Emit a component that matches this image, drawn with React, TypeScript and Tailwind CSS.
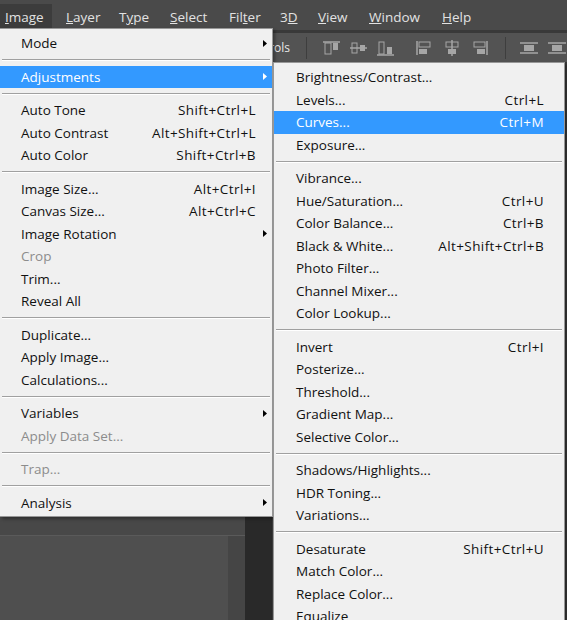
import clsx from "clsx";

type Row =
  | { label: string; shortcut?: string; sub?: boolean; disabled?: boolean; active?: boolean }
  | "sep";

const mainItems: Row[] = [
  { label: "Mode", sub: true },
  "sep",
  { label: "Adjustments", sub: true, active: true },
  "sep",
  { label: "Auto Tone", shortcut: "Shift+Ctrl+L" },
  { label: "Auto Contrast", shortcut: "Alt+Shift+Ctrl+L" },
  { label: "Auto Color", shortcut: "Shift+Ctrl+B" },
  "sep",
  { label: "Image Size...", shortcut: "Alt+Ctrl+I" },
  { label: "Canvas Size...", shortcut: "Alt+Ctrl+C" },
  { label: "Image Rotation", sub: true },
  { label: "Crop", disabled: true },
  { label: "Trim..." },
  { label: "Reveal All" },
  "sep",
  { label: "Duplicate..." },
  { label: "Apply Image..." },
  { label: "Calculations..." },
  "sep",
  { label: "Variables", sub: true },
  { label: "Apply Data Set...", disabled: true },
  "sep",
  { label: "Trap...", disabled: true },
  "sep",
  { label: "Analysis", sub: true },
];

const adjustItems: Row[] = [
  { label: "Brightness/Contrast..." },
  { label: "Levels...", shortcut: "Ctrl+L" },
  { label: "Curves...", shortcut: "Ctrl+M", active: true },
  { label: "Exposure..." },
  "sep",
  { label: "Vibrance..." },
  { label: "Hue/Saturation...", shortcut: "Ctrl+U" },
  { label: "Color Balance...", shortcut: "Ctrl+B" },
  { label: "Black & White...", shortcut: "Alt+Shift+Ctrl+B" },
  { label: "Photo Filter..." },
  { label: "Channel Mixer..." },
  { label: "Color Lookup..." },
  "sep",
  { label: "Invert", shortcut: "Ctrl+I" },
  { label: "Posterize..." },
  { label: "Threshold..." },
  { label: "Gradient Map..." },
  { label: "Selective Color..." },
  "sep",
  { label: "Shadows/Highlights..." },
  { label: "HDR Toning..." },
  { label: "Variations..." },
  "sep",
  { label: "Desaturate", shortcut: "Shift+Ctrl+U" },
  { label: "Match Color..." },
  { label: "Replace Color..." },
  { label: "Equalize" },
];

const menuBar = [
  { pre: "", u: "L", post: "ayer", w: "w-[53px]" },
  { pre: "T", u: "y", post: "pe", w: "w-[51px]" },
  { pre: "", u: "S", post: "elect", w: "w-[59px]" },
  { pre: "Fil", u: "t", post: "er", w: "w-[51px]" },
  { pre: "3", u: "D", post: "", w: "w-[38px]" },
  { pre: "", u: "V", post: "iew", w: "w-[51px]" },
  { pre: "", u: "W", post: "indow", w: "w-[73px]" },
  { pre: "", u: "H", post: "elp", w: "w-[50px]" },
];

const Arrow = ({ white }: { white?: boolean }) => (
  <svg width="4" height="7" viewBox="0 0 4 7">
    <path d="M0 0 L4 3.5 L0 7 Z" fill={white ? "#ffffff" : "#000000"} />
  </svg>
);

const Separator = () => (
  <div className="flex h-[11px] flex-col justify-center px-[2px]">
    <div className="h-px bg-[#a0a0a0]" />
    <div className="h-px bg-white" />
  </div>
);

const MenuList = ({ items, padL, padR, arrows }: { items: Row[]; padL: string; padR: string; arrows?: boolean }) => (
  <>
    {items.map((it, i) =>
      it === "sep" ? (
        <Separator key={i} />
      ) : (
        <div
          key={i}
          className={clsx(
            "flex h-[22.5px] items-center whitespace-nowrap",
            padL,
            padR,
            it.active ? "bg-[#3399ff] text-white" : it.disabled ? "text-[#8c8c8c]" : "text-[#111111]"
          )}
        >
          <span className="flex-1">{it.label}</span>
          {it.shortcut && <span className="tracking-[0.4px]">{it.shortcut}</span>}
          {arrows && (
            <span className="flex w-[11px] justify-end">{it.sub && <Arrow white={it.active} />}</span>
          )}
        </div>
      )
    )}
  </>
);

const ToolIcon = ({ kind }: { kind: number }) => {
  const c = "#a6a6a6";
  return (
    <svg width="20" height="18" viewBox="0 0 20 18">
      {kind === 0 && (
        <>
          <path d="M1 3 H18" stroke={c} strokeWidth="1.5" />
          <rect x="3" y="4" width="6" height="11" fill="none" stroke={c} />
          <rect x="11" y="4" width="5" height="7" fill={c} />
        </>
      )}
      {kind === 1 && (
        <>
          <path d="M1 9 H18" stroke={c} strokeWidth="1.5" />
          <rect x="3" y="4" width="5" height="10" fill="none" stroke={c} />
          <rect x="11" y="6" width="5" height="6" fill={c} />
        </>
      )}
      {kind === 2 && (
        <>
          <path d="M1 16 H18" stroke={c} strokeWidth="1.5" />
          <rect x="3" y="3" width="5" height="12" fill="none" stroke={c} />
          <rect x="11" y="8" width="5" height="7" fill={c} />
        </>
      )}
      {kind === 3 && (
        <>
          <path d="M3 2 V16" stroke={c} strokeWidth="1.5" />
          <rect x="5" y="3" width="11" height="5" fill="none" stroke={c} />
          <rect x="5" y="10" width="8" height="5" fill={c} />
        </>
      )}
      {kind === 4 && (
        <>
          <path d="M10 1 V17" stroke={c} strokeWidth="1.5" />
          <rect x="4" y="3" width="12" height="5" fill="none" stroke={c} />
          <rect x="6" y="10" width="8" height="5" fill={c} />
        </>
      )}
      {kind === 5 && (
        <>
          <path d="M17 2 V16" stroke={c} strokeWidth="1.5" />
          <rect x="4" y="3" width="11" height="5" fill="none" stroke={c} />
          <rect x="7" y="10" width="8" height="5" fill={c} />
        </>
      )}
      {kind === 6 && (
        <>
          <path d="M1 4 H19 M1 14 H19" stroke={c} strokeWidth="1.5" />
          <rect x="5" y="6" width="10" height="6" fill={c} />
        </>
      )}
    </svg>
  );
};

export default function App() {
  return (
    <div
      className="relative h-[620px] w-[567px] overflow-hidden bg-[#535353] text-[13.5px]"
      style={{ fontFamily: '"Open Sans", "Noto Sans", sans-serif' }}
    >
      {/* menu bar */}
      <div className="flex h-[30px] items-end bg-[#4a4a4a] text-[13.5px] text-[#e2e2e2]">
        <div className="flex h-[26px] w-[52px] items-center bg-[#3c3c3c] pl-[5px]">
          <span>
            <u>I</u>mage
          </span>
        </div>
        <div className="ml-[14px] flex h-[26px] items-center">
          {menuBar.map((m) => (
            <span key={m.pre + m.u + m.post} className={m.w}>
              {m.pre}
              <u>{m.u}</u>
              {m.post}
            </span>
          ))}
        </div>
      </div>

      {/* options bar */}
      <div className="flex h-[32px] items-center border-t-[3px] border-[#393939] bg-[#535353]">
        <span className="w-[296px] whitespace-nowrap text-right text-[12px] text-[#e8e8e8]">
          Show Transform Controls
        </span>
        <div className="ml-[16px] h-[22px] w-px bg-[#3e3e3e]" />
        <div className="ml-[15px] flex items-center gap-[7px]">
          <ToolIcon kind={0} />
          <ToolIcon kind={1} />
          <ToolIcon kind={2} />
        </div>
        <div className="ml-[18px] flex items-center gap-[8px]">
          <ToolIcon kind={3} />
          <ToolIcon kind={4} />
          <ToolIcon kind={5} />
        </div>
        <div className="ml-[15px] h-[22px] w-px bg-[#3e3e3e]" />
        <div className="ml-[13px] flex items-center gap-[8px]">
          <ToolIcon kind={6} />
          <ToolIcon kind={6} />
        </div>
      </div>

      {/* workspace */}
      <div className="flex h-[558px]">
        <div className="flex w-[245px] flex-col">
          <div className="flex-1 bg-[#3d3d3d]" />
          <div className="h-[19px] border-b border-[#5a5a5a] bg-[#484848]" />
          <div className="flex h-[84px]">
            <div className="w-[228px] bg-[#4f4f4f]" />
            <div className="flex-1 bg-[#454545]" />
          </div>
        </div>
        <div className="w-[27px] bg-[#292929]" />
        <div className="flex-1 bg-[#3a3a3a]" />
      </div>

      {/* Image menu */}
      <div className="absolute left-0 top-[28px] w-[273px] border border-l-0 border-[#979797] bg-[#f0f0f0] pb-[2px] pt-[3px] shadow-[2px_2px_3px_rgba(0,0,0,0.35)]">
        <MenuList items={mainItems} padL="pl-[21px]" padR="pr-[5px]" arrows />
      </div>

      {/* Adjustments submenu */}
      <div className="absolute left-[273px] top-[62px] w-[292px] border border-[#979797] bg-[#f0f0f0] pt-[3px] shadow-[2px_2px_3px_rgba(0,0,0,0.35)]">
        <MenuList items={adjustItems} padL="pl-[22px]" padR="pr-[20px]" />
      </div>
    </div>
  );
}
